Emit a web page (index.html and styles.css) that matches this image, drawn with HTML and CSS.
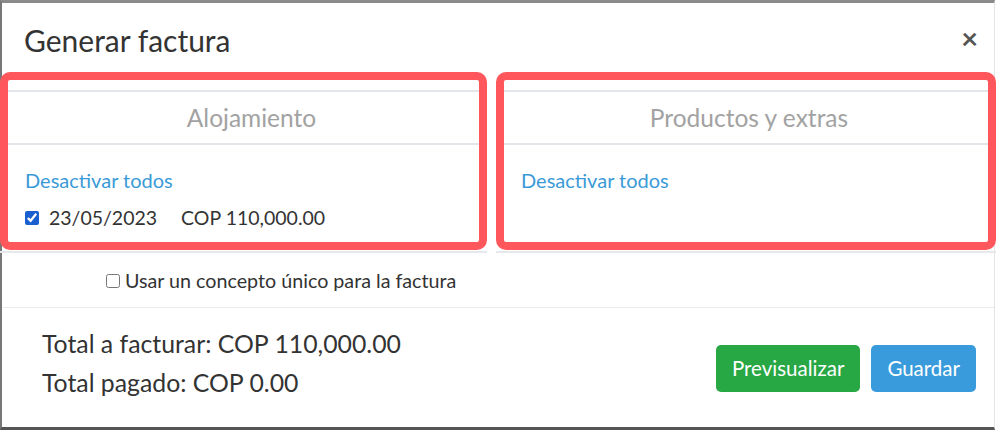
FILE: index.html
```html
<!DOCTYPE html>
<html lang="es">
<head>
    <meta charset="UTF-8">
    <meta name="viewport" content="width=device-width, initial-scale=1.0">
    <title>Generar factura</title>
    <link rel="stylesheet" href="styles.css">
</head>
<body>
    <div class="modal">
        <header class="modal-header">
            <h1>Generar factura</h1>
            <span class="close">&times;</span>
        </header>

        <section class="cols">
            <div class="col col-left">
                <div class="frame">
                    <div class="panel-title">Alojamiento</div>
                    <div class="panel-body">
                        <a href="#" class="toggle-all">Desactivar todos</a>
                        <label class="item">
                            <input type="checkbox" checked>
                            <span class="date">23/05/2023</span>
                            <span>COP 110,000.00</span>
                        </label>
                    </div>
                </div>
            </div>
            <div class="col col-right">
                <div class="frame">
                    <div class="panel-title">Productos y extras</div>
                    <div class="panel-body">
                        <a href="#" class="toggle-all">Desactivar todos</a>
                    </div>
                </div>
            </div>
        </section>

        <label class="concept">
            <input type="checkbox">
            <span>Usar un concepto único para la factura</span>
        </label>

        <footer class="modal-footer">
            <div class="totals">
                <p>Total a facturar: COP 110,000.00</p>
                <p>Total pagado: COP 0.00</p>
            </div>
            <div class="actions">
                <button class="btn btn-green">Previsualizar</button>
                <button class="btn btn-blue">Guardar</button>
            </div>
        </footer>
    </div>
</body>
</html>
```

FILE: styles.css
```css
/* General */
* {
    margin: 0;
    padding: 0;
    box-sizing: border-box;
}

body {
    font-family: 'Lato', 'Liberation Sans', sans-serif;
    background: #fff;
    color: #333;
    overflow: hidden;
}

.modal {
    width: 995px;
    height: 430px;
    border-top: 3px solid #8a8a8a;
    border-left: 2px solid #777;
    border-right: 1px solid #e4e4e4;
    border-bottom: 3px solid #555;
    background: #fff;
}

/* Header */
.modal-header {
    height: 69px;
    display: flex;
    justify-content: space-between;
    align-items: center;
    padding: 4px 16px 0 22px;
}

.modal-header h1 {
    font-size: 30px;
    font-weight: 400;
    color: #333;
}

.close {
    font-size: 29px;
    font-weight: 700;
    color: #555;
    line-height: 1;
    margin-top: -5px;
}

/* Panels */
.cols {
    display: grid;
    grid-template-columns: 487px 500px;
    column-gap: 9px;
    margin-left: -2px;
}

.col {
    border-bottom: 2px solid #e6e8ec;
    padding-bottom: 1px;
}

.frame {
    height: 178px;
    border: 8px solid #ff575c;
    border-radius: 10px;
    padding-top: 10px;
}

.panel-title {
    height: 55px;
    border-top: 2px solid #e2e5ea;
    border-bottom: 2px solid #e2e5ea;
    display: flex;
    align-items: center;
    justify-content: center;
    font-size: 24.5px;
    color: #a2a2a2;
}

.col-left .panel-title {
    padding-left: 16px;
}

.col-right .panel-title {
    padding-left: 6px;
}

.panel-body {
    padding: 23px 17px 0;
}

.toggle-all {
    display: block;
    color: #3a9ad8;
    text-decoration: none;
    font-size: 20px;
    line-height: 24px;
}

.item {
    display: flex;
    align-items: center;
    margin-top: 14px;
    font-size: 19.5px;
    color: #333;
}

.item input {
    width: 14px;
    height: 14px;
    margin: 0 10px 0 0;
    accent-color: #1a5fd0;
}

.item .date {
    margin-right: 24px;
}

/* Concept */
.concept {
    display: flex;
    align-items: center;
    height: 54px;
    padding-left: 104px;
    font-size: 19.7px;
    color: #333;
    border-bottom: 1px solid #ececec;
    margin-top: 1px;
}

.concept input {
    width: 14px;
    height: 14px;
    margin: 0 5px 0 0;
}

/* Footer */
.modal-footer {
    display: flex;
    justify-content: space-between;
    align-items: center;
    padding: 16px 18px 0 40px;
}

.totals p {
    font-size: 24.8px;
    line-height: 39px;
    color: #333;
}

.actions {
    display: flex;
    gap: 11px;
    margin-top: 10px;
}

.btn {
    height: 47px;
    padding: 0 16px;
    border: none;
    border-radius: 5px;
    font-family: 'Lato', sans-serif;
    font-size: 20.5px;
    color: #fff;
    cursor: pointer;
}

.btn-green {
    background-color: #28a745;
}

.btn-blue {
    background-color: #3a9bdc;
}
```
